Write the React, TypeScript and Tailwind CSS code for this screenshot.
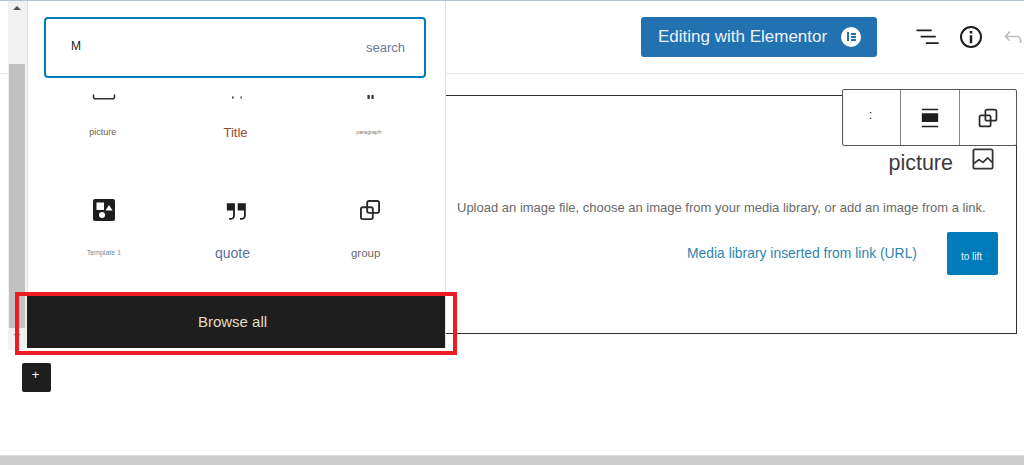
import React from "react";

const P = {
  image: "M19 3H5c-1.1 0-2 .9-2 2v14c0 1.1.9 2 2 2h14c1.1 0 2-.9 2-2V5c0-1.1-.9-2-2-2zM5 4.5h14c.3 0 .5.2.5.5v8.4l-3-2.9c-.3-.3-.8-.3-1 0L11.9 14 9 12c-.3-.2-.6-.2-.8 0l-3.6 2.6V5c-.1-.3.1-.5.4-.5zm14 15H5c-.3 0-.5-.2-.5-.5v-2.4l4.1-3 3 1.9c.3.2.7.2.9-.1L16 12l3.5 3.4V19c0 .3-.2.5-.5.5z",
  group: "M18 4h-7c-1.1 0-2 .9-2 2v3H6c-1.1 0-2 .9-2 2v7c0 1.1.9 2 2 2h7c1.1 0 2-.9 2-2v-3h3c1.1 0 2-.7 2-2V6c0-1.1-.9-2-2-2zm-4.5 14c0 .3-.2.5-.5.5H6c-.3 0-.5-.2-.5-.5v-7c0-.3.2-.5.5-.5h3V13c0 1.1.9 2 2 2h2.5v3zm0-4.5H11c-.3 0-.5-.2-.5-.5v-2.5H13c.3 0 .5.2.5.5v2.5zm5-.5c0 .3-.2.5-.5.5h-3V11c0-1.1-.9-2-2-2h-2.5V6c0-.3.2-.5.5-.5h7c.3 0 .5.2.5.5v7z",
  quote: "M13 6v6h5.2v4c0 .8-.2 1.4-.5 1.7-.6.6-1.6.6-2.5.5h-.3v1.5h.5c1 0 2.3-.1 3.3-1 .6-.6 1-1.6 1-2.7V6H13zm-9 6h5.2v4c0 .8-.2 1.4-.5 1.7-.6.6-1.6.6-2.5.5h-.3v1.5h.5c1 0 2.3-.1 3.3-1 .6-.6 1-1.6 1-2.7V6H4v6z",
  list: "M3 5.5h13V7H3V5.5zm3.5 5.5h13v1.5h-13V11zM22 16.5H11V18h11v-1.5z",
  undo: "M18.3 11.7c-.6-.6-1.4-.9-2.3-.9H6.7l2.9-3.3-1.1-1-4.5 5L8.5 16l1-1-2.7-2.7H16c.5 0 .9.2 1.3.5 1 1 1 3.4 1 4.5v.3h1.5v-.2c0-1.5 0-4.3-1.5-5.7z",
  info: "M12 3.2a8.8 8.8 0 1 0 0 17.6 8.8 8.8 0 0 0 0-17.6zm0 16a7.2 7.2 0 1 1 0-14.4 7.2 7.2 0 0 1 0 14.4zM11 10.5h2V17h-2zM11 7.2h2v2h-2z",
  full: "M5 4h14v1.4H5zM5 8h14v7.4H5zM5 18.6h14V20H5z",
};

function Icon({ d, size = 24, color = "#1e1e1e" }: { d: string; size?: number; color?: string }) {
  return (
    <svg width={size} height={size} viewBox="0 0 24 24" fill={color} className="block shrink-0">
      <path d={d} />
    </svg>
  );
}

function Template() {
  return (
    <svg width="24" height="24" viewBox="0 0 24 24" className="block shrink-0">
      <rect x="1" y="1" width="22" height="22" rx="2" fill="#1e1e1e" />
      <rect x="4.5" y="4.5" width="7.5" height="7.5" fill="#fff" />
      <path d="M17 7l3.5 5.5h-7z" fill="#fff" />
      <circle cx="10" cy="17" r="3" fill="#fff" />
    </svg>
  );
}

function Ticks({ kind }: { kind: "image" | "title" | "para" }) {
  return (
    <svg width="24" height="24" viewBox="0 0 24 24" className="block shrink-0">
      {kind === "image" && <path d="M1.5 17.5v2.5c0 1 .7 1.8 1.8 1.8h17.4c1.1 0 1.8-.8 1.8-1.8v-2.5" fill="none" stroke="#333" strokeWidth="1.5" />}
      {kind === "title" && <path d="M7 19.5h1.5v2H7zM15.5 19.5H17l-.5 2h-1z" fill="#333" />}
      {kind === "para" && <path d="M9.5 18h2.2v4H9.5zM13.5 18h2.2v4h-2.2z" fill="#333" />}
    </svg>
  );
}

function Cell({ icon, label, cls, nudge }: { icon: React.ReactNode; label: string; cls: string; nudge: string }) {
  return (
    <div className="flex flex-col items-center h-[121px]">
      <div className="h-6 w-6 flex items-center justify-center">{icon}</div>
      <div className={`h-[62px] flex items-center ${nudge} ${cls}`}>{label}</div>
    </div>
  );
}

export default function App() {
  return (
    <div className="relative h-[465px] w-[1024px] overflow-hidden bg-white flex flex-col font-['Liberation_Sans',Arial,sans-serif]">
      <div className="h-px bg-[#b6c2da]" />
      <header className="h-[73px] shrink-0 border-b border-[#e6e6e6] flex items-center justify-end">
        <div className="h-10 w-[236px] mb-[1px] mr-[37px] rounded-[3px] bg-[#2271b1] flex items-center pl-[17px] gap-[14px] text-white">
          <span className="text-[17px] text-[#eef4fa] whitespace-nowrap">Editing with Elementor</span>
          <span className="relative h-5 w-5 rounded-full bg-white flex items-center justify-center gap-[2px]">
            <span className="h-[9px] w-[2px] bg-[#2271b1]" />
            <span className="flex flex-col gap-[1px]">
              <span className="h-[2px] w-[5px] bg-[#2271b1]" />
              <span className="h-[2px] w-[5px] bg-[#2271b1]" />
              <span className="h-[2px] w-[5px] bg-[#2271b1]" />
            </span>
          </span>
        </div>
        <div className="mr-[14px] ml-[-1px]"><Icon d={P.list} size={28} /></div>
        <div className="mr-[14px] ml-[1px]"><Icon d={P.info} size={30} /></div>
        <div className="w-[24px]"><Icon d={P.undo} size={26} color="#bdbdbd" /></div>
      </header>

      <main className="flex-1 min-h-0">
        <section className="mt-[21px] ml-[430px] w-[587px] h-[239px] border border-[#2f2f2f] flex flex-col">
          <div className="flex justify-end items-start pt-[49px] pr-[19px] gap-[16px]">
            <span className="mt-[6px] text-[21.5px] leading-[24px] text-[#3c3c3c]">picture</span>
            <Icon d={P.image} size={28} color="#333" />
          </div>
          <p className="mt-[24px] pl-[26px] text-[13px] leading-[18px] text-[#6a6a6a] whitespace-nowrap">
            Upload an image file, choose an image from your media library, or add an image from a link.
          </p>
          <div className="mt-[15px] pr-[18px] flex justify-end items-center gap-[30px]">
            <span className="text-[13.9px] text-[#2f86b0] whitespace-nowrap">Media library inserted from link (URL)</span>
            <span className="h-[43px] w-[51px] rounded-[2px] bg-[#007cba] flex items-center justify-center pt-[5px] pr-[2px] text-[10px] text-[#e4f0f7]">to lift</span>
          </div>
        </section>
      </main>

      <div className="h-[10px] shrink-0 border-t border-[#dcdcdc] bg-[#cdcdcd]" />

      {/* toolbar over the block */}
      <div className="absolute left-[842px] top-[89px] h-[57px] w-[175px] rounded-[2px] border border-[#555] bg-white flex">
        <div className="w-[58px] border-r border-[#888] flex items-center justify-center pb-[6px] pr-[2px] text-[13px] text-[#333]">:</div>
        <div className="w-[59px] border-r border-[#888] flex items-center justify-center"><Icon d={P.full} size={28} /></div>
        <div className="flex-1 flex items-center justify-center"><Icon d={P.group} size={28} color="#2a2a2a" /></div>
      </div>

      {/* scrollbar beside the inserter */}
      <div className="absolute left-[8px] top-px h-[349px] w-[19px] bg-[#f1f1f1] flex flex-col items-center">
        <span className="mt-[5px] mr-[2px] h-0 w-0 border-x-[4px] border-b-[4px] border-x-transparent border-b-[#505050]" />
        <span className="mt-[54px] mr-[2px] h-[264px] w-[16px] bg-[#c1c1c1]" />
        <span className="mt-[6px] mr-[2px] h-0 w-0 border-x-[4px] border-t-[4px] border-x-transparent border-t-[#a3a3a3]" />
      </div>

      {/* block inserter popover */}
      <div className="absolute left-[27px] top-px h-[347px] w-[419px] bg-white border-x border-[#e0e0e0] flex flex-col">
        <div className="mt-[16px] ml-[16px] h-[61px] w-[382px] shrink-0 rounded-[4px] border-[2.5px] border-[#007cba] flex items-center justify-between pl-[25px] pr-[19px]">
          <span className="text-[12px] text-[#222] mb-[3px]">M</span>
          <span className="text-[13px] text-[#6b7a9e]">search</span>
        </div>
        <div className="h-[206px] mt-[14px] ml-[10px] w-[398px] overflow-hidden">
          <div className="mt-[-15px] grid grid-cols-3">
            <Cell icon={<Ticks kind="image" />} label="picture" cls="text-[9px] text-[#6f5d50]" nudge="ml-[-3px] pt-[2px]" />
            <Cell icon={<Ticks kind="title" />} label="Title" cls="text-[13px] text-[#8e4a32]" nudge="mr-[3px] pt-[1px]" />
            <Cell icon={<Ticks kind="para" />} label="paragraph" cls="text-[5.5px] text-[#777]" nudge="mr-[2px]" />
            <Cell icon={<Template />} label="Template 1" cls="text-[7px] text-[#6a8b9a]" nudge="mr-[1px] mb-[2px]" />
            <Cell icon={<Icon d={P.quote} size={29} />} label="quote" cls="text-[14px] text-[#5c7199]" nudge="mr-[9px]" />
            <Cell icon={<Icon d={P.group} size={30} color="#2a2a2a" />} label="group" cls="text-[11.5px] text-[#6a6a6a]" nudge="mr-[8px] pt-[2px]" />
          </div>
        </div>
        <div className="mt-auto ml-[-1px] h-[52px] shrink-0 bg-[#1e1e1e] flex items-center justify-center pr-[7px] text-[15px] text-[#e6dcc2]">Browse all</div>
      </div>

      {/* red annotation */}
      <div className="absolute left-[15px] top-[292px] h-[63px] w-[442px] border-4 border-[#ed1c24]" />

      {/* appender */}
      <div className="absolute left-[22px] top-[363px] h-[29px] w-[29px] rounded-[2px] bg-[#1e1e1e] flex items-center justify-center pr-[2px] pb-[5px] text-[13px] text-white">+</div>
    </div>
  );
}
